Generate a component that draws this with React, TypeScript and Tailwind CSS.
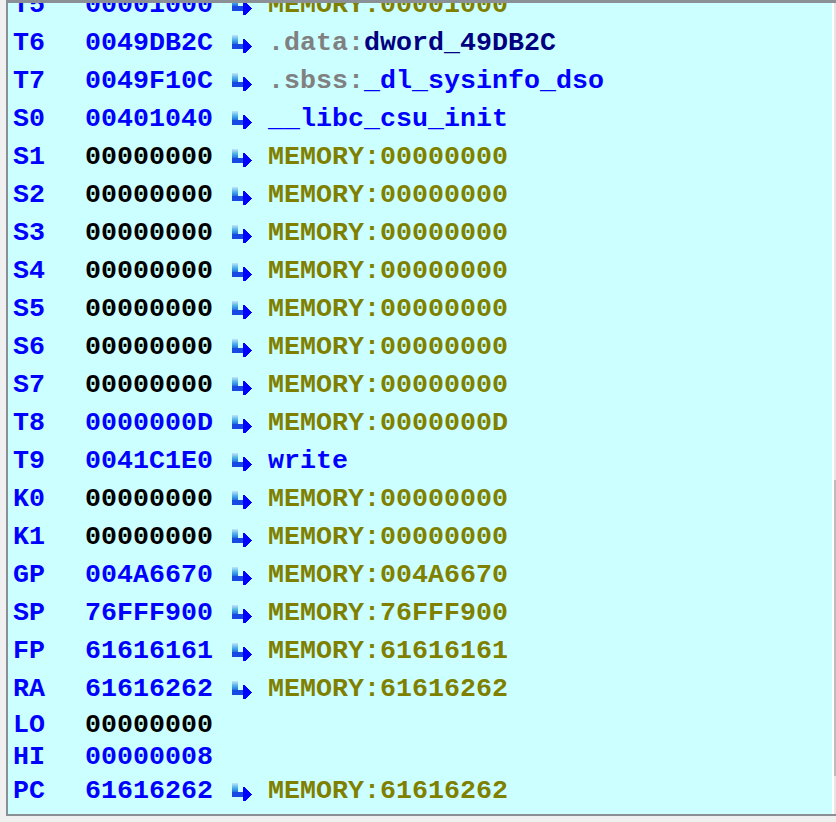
import React from 'react';

type Seg = [string, string];

interface Reg {
  name: string;
  value: string;
  changed: boolean;
  target?: Seg[];
}

const MEM = 'text-[#808000]';
const SEG = 'text-[#808080]';
const NAVY = 'text-[#000080]';
const BLUE = 'text-[#0000ff]';

const mem = (v: string): Seg[] => [['MEMORY:' + v, MEM]];

const regs: Reg[] = [
  { name: 'T5', value: '00001000', changed: true, target: mem('00001000') },
  { name: 'T6', value: '0049DB2C', changed: true, target: [['.data:', SEG], ['dword_49DB2C', NAVY]] },
  { name: 'T7', value: '0049F10C', changed: true, target: [['.sbss:', SEG], ['_dl_sysinfo_dso', BLUE]] },
  { name: 'S0', value: '00401040', changed: true, target: [['__libc_csu_init', BLUE]] },
  { name: 'S1', value: '00000000', changed: false, target: mem('00000000') },
  { name: 'S2', value: '00000000', changed: false, target: mem('00000000') },
  { name: 'S3', value: '00000000', changed: false, target: mem('00000000') },
  { name: 'S4', value: '00000000', changed: false, target: mem('00000000') },
  { name: 'S5', value: '00000000', changed: false, target: mem('00000000') },
  { name: 'S6', value: '00000000', changed: false, target: mem('00000000') },
  { name: 'S7', value: '00000000', changed: false, target: mem('00000000') },
  { name: 'T8', value: '0000000D', changed: true, target: mem('0000000D') },
  { name: 'T9', value: '0041C1E0', changed: true, target: [['write', BLUE]] },
  { name: 'K0', value: '00000000', changed: false, target: mem('00000000') },
  { name: 'K1', value: '00000000', changed: false, target: mem('00000000') },
  { name: 'GP', value: '004A6670', changed: true, target: mem('004A6670') },
  { name: 'SP', value: '76FFF900', changed: true, target: mem('76FFF900') },
  { name: 'FP', value: '61616161', changed: true, target: mem('61616161') },
  { name: 'RA', value: '61616262', changed: true, target: mem('61616262') },
  { name: 'LO', value: '00000000', changed: false },
  { name: 'HI', value: '00000008', changed: true },
  { name: 'PC', value: '61616262', changed: true, target: mem('61616262') },
];

// little IDA "points to" arrow
const JumpArrow: React.FC<{ id: string }> = ({ id }) => (
  <svg width="20" height="18" viewBox="0 0 20 18" shapeRendering="crispEdges" className="shrink-0">
    <defs>
      <linearGradient id={id} x1="0" y1="0" x2="0" y2="1">
        <stop offset="0" stopColor="#c4e4fc" />
        <stop offset="0.35" stopColor="#48b0e8" />
        <stop offset="0.7" stopColor="#1c60e0" />
        <stop offset="1" stopColor="#1030e8" />
      </linearGradient>
    </defs>
    <rect x="0" y="0" width="6" height="14" fill={`url(#${id})`} />
    <rect x="0" y="9" width="13" height="5" fill="#1848e4" />
    <polygon points="11,4 12,4 20,11.5 12,19 11,19" fill="#0000ff" />
  </svg>
);

export default function App() {
  return (
    <div className="w-[836px] h-[822px] bg-[#f0f0f0] pl-[6px] pb-[6px] flex">
      <div className="flex-1 flex border-l-2 border-t-[3px] border-b-2 border-[#8a9096] overflow-hidden">
        <div className="flex-1 bg-[#ccffff] overflow-hidden font-['Liberation_Mono',monospace] font-bold text-[26.67px]">
          <div className="-mt-[17px] pl-[5px]">
            {regs.map((r, i) => (
              <div
                key={r.name}
                className={`flex items-start whitespace-pre ${r.target ? 'h-[38px] pt-[5px]' : 'h-[32px] pt-[3px]'}`}
              >
                <span className="w-[72px] shrink-0 leading-[29px] text-[#0000ff]">{r.name}</span>
                <span className={`w-[128px] shrink-0 leading-[29px] ${r.changed ? 'text-[#0000ff]' : 'text-black'}`}>
                  {r.value}
                </span>
                {r.target && (
                  <>
                    <span className="ml-[19px] mt-[6px]">
                      <JumpArrow id={`ga${i}`} />
                    </span>
                    <span className="ml-[16px] leading-[29px]">
                      {r.target.map(([t, c], j) => (
                        <span key={j} className={c}>
                          {t}
                        </span>
                      ))}
                    </span>
                  </>
                )}
              </div>
            ))}
          </div>
        </div>
        <div className="w-[2px] bg-white" />
        <div className="w-[2px] flex flex-col bg-[#e6e6e6]">
          <div className="h-[477px]" />
          <div className="h-[296px] bg-[#bcbcbc]" />
        </div>
      </div>
    </div>
  );
}
